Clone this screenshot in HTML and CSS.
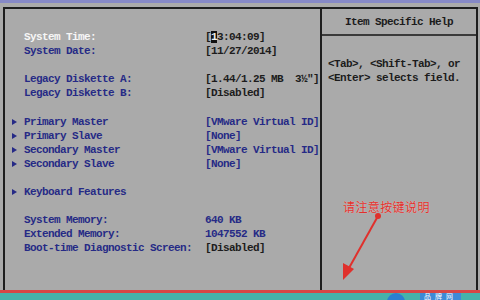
FILE: index.html
```html
<!DOCTYPE html>
<html lang="en">
<head>
  <meta charset="UTF-8">
  <title>BIOS Setup</title>
  <link rel="stylesheet" href="styles.css">
</head>
<body>
  <div class="topbar"></div>
  <div class="frame">
    <div class="main">
      <div class="row"><span></span><span class="label current">System Time:</span><span class="value">[<span class="cursor">1</span>3:04:09]</span></div>
      <div class="row"><span></span><span class="label">System Date:</span><span class="value">[11/27/2014]</span></div>
      <div class="blank"></div>
      <div class="row"><span></span><span class="label">Legacy Diskette A:</span><span class="value">[1.44/1.25 MB  3½"]</span></div>
      <div class="row"><span></span><span class="label">Legacy Diskette B:</span><span class="value">[Disabled]</span></div>
      <div class="blank"></div>
      <div class="row"><span class="marker"></span><span class="label">Primary Master</span><span class="value blue">[VMware Virtual ID]</span></div>
      <div class="row"><span class="marker"></span><span class="label">Primary Slave</span><span class="value blue">[None]</span></div>
      <div class="row"><span class="marker"></span><span class="label">Secondary Master</span><span class="value blue">[VMware Virtual ID]</span></div>
      <div class="row"><span class="marker"></span><span class="label">Secondary Slave</span><span class="value blue">[None]</span></div>
      <div class="blank"></div>
      <div class="row"><span class="marker"></span><span class="label">Keyboard Features</span><span></span></div>
      <div class="blank"></div>
      <div class="row"><span></span><span class="label">System Memory:</span><span class="value blue">640 KB</span></div>
      <div class="row"><span></span><span class="label">Extended Memory:</span><span class="value blue">1047552 KB</span></div>
      <div class="row"><span></span><span class="label">Boot-time Diagnostic Screen:</span><span class="value">[Disabled]</span></div>
    </div>
    <div class="help">
      <div class="help-title">Item Specific Help</div>
      <div class="help-text">&lt;Tab&gt;, &lt;Shift-Tab&gt;, or<br>&lt;Enter&gt; selects field.</div>
    </div>
  </div>
  <div class="taskbar">
    <span class="orb"></span>
    <span class="brand">品牌网</span>
  </div>

  <!-- red annotation drawn over the screenshot -->
  <div class="note">请注意按键说明</div>
  <svg class="note-arrow" width="480" height="300" viewBox="0 0 480 300">
    <circle cx="378" cy="216" r="3" fill="#e0302c"/>
    <line x1="378" y1="216" x2="349" y2="268" stroke="#e0302c" stroke-width="2"/>
    <polygon points="343,280 343,263 354,269" fill="#e0302c"/>
  </svg>
</body>
</html>
```
FILE: styles.css
```css
body {
  margin: 0;
  width: 480px;
  height: 300px;
  overflow: hidden;
  background: #aaaaaa;
  font-family: "Liberation Mono", "DejaVu Sans Mono", monospace;
  font-size: 11px;
  font-weight: bold;
  letter-spacing: -0.6px;
  display: flex;
  flex-direction: column;
  position: relative;
}
.topbar {
  height: 3px;
  background: #8689c6;
  margin-bottom: 4px;
}
.frame {
  height: 281px;
  margin: 0 2px 0 3px;
  border: 2px solid #1e1e1e;
  border-bottom: none;
  display: flex;
}
.main {
  width: 315px;
  padding: 21px 0 0 7px;
  box-sizing: border-box;
}
.row {
  display: grid;
  grid-template-columns: 12px 181px auto;
  height: 14.1px;
  line-height: 14px;
  white-space: pre;
}
.blank {
  height: 14.1px;
}
.label {
  color: #262a86;
}
.label.current {
  color: #f6f6f6;
}
.value {
  color: #1c1c1c;
}
.value.blue {
  color: #262a86;
}
.cursor {
  background: #111;
  color: #eee;
}
.marker {
  width: 0;
  height: 0;
  margin-top: 4px;
  border-top: 3px solid transparent;
  border-bottom: 3px solid transparent;
  border-left: 5px solid #262a86;
}
.help {
  width: 156px;
  border-left: 2px solid #1e1e1e;
  box-sizing: border-box;
}
.help-title {
  height: 25px;
  line-height: 26px;
  text-align: center;
  color: #1c1c1c;
  border-bottom: 2px solid #3a3a3a;
}
.help-text {
  padding: 21px 0 0 6px;
  line-height: 14px;
  color: #1c1c1c;
}
.taskbar {
  height: 7px;
  border-top: 3px solid #d64646;
  background: #45b2aa;
  position: relative;
  overflow: hidden;
}
.orb {
  position: absolute;
  left: 387px;
  top: 0;
  width: 18px;
  height: 18px;
  border-radius: 50%;
  background: #2b7fd0;
}
.brand {
  position: absolute;
  left: 420px;
  top: 0;
  padding: 0 4px;
  background: #3d8ad6;
  color: #fff;
  font-family: "Noto Sans CJK SC", sans-serif;
  font-size: 7px;
  font-weight: normal;
  letter-spacing: 4px;
  line-height: 7px;
}
.note {
  position: absolute;
  left: 343px;
  top: 198px;
  color: #e0302c;
  font-family: "Noto Sans CJK SC", sans-serif;
  font-size: 12px;
  font-weight: normal;
  letter-spacing: 0.4px;
  text-shadow: 0 0 1px #f2c8c8;
}
.note-arrow {
  position: absolute;
  left: 0;
  top: 0;
}
```
